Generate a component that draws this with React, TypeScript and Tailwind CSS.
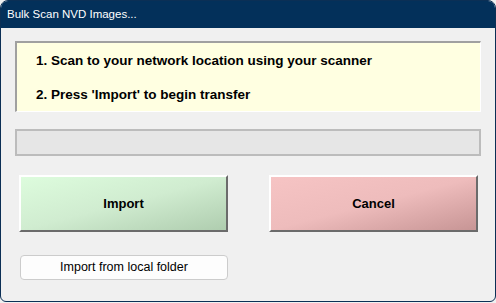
import React from 'react';

export default function App() {
  return (
    <div className="w-[496px] h-[303px] bg-[#f0f0f0] font-['Liberation_Sans',Arial,sans-serif]">
      <div className="w-[496px] h-[302px] flex flex-col border border-[#0b2f55] rounded-t-[8px] rounded-b-[6px] overflow-hidden bg-[#f0f0f0]">
        {/* Title bar */}
        <div className="h-[27px] shrink-0 bg-[#03305a] flex items-center pl-[6px]">
          <span className="text-white text-[11.5px] leading-none">Bulk Scan NVD Images...</span>
        </div>

        <div className="flex flex-col px-[14px] pt-[13px]">
          {/* Instructions */}
          <div className="h-[71px] bg-[#ffffe1] border-t-2 border-l-2 border-t-[#a0a0a0] border-l-[#a0a0a0] border-b border-r border-b-white border-r-white pl-[19px] pt-[10px] flex flex-col gap-[18px]">
            <span className="text-[13.5px] font-bold text-black leading-[16px]">1. Scan to your network location using your scanner</span>
            <span className="text-[13.5px] font-bold text-black leading-[16px]">2. Press 'Import' to begin transfer</span>
          </div>

          {/* Progress bar */}
          <div className="mt-[17px] h-[27px] bg-[#e6e6e6] border-2 border-[#bcbcbc]" />

          {/* Action buttons */}
          <div className="mt-[19px] pl-[4px] flex gap-[41px]">
            <button className="w-[209px] h-[57px] bg-gradient-to-br from-[#ddfcdd] via-[#d0ecd0] to-[#afcdaf] border-t-2 border-l-2 border-t-white border-l-white border-b-2 border-r-2 border-b-[#6b6b6b] border-r-[#6b6b6b] text-[13px] font-bold text-black">
              Import
            </button>
            <button className="w-[209px] h-[57px] bg-gradient-to-br from-[#f6c4c4] via-[#eebcbc] to-[#c79595] border-t-2 border-l-2 border-t-white border-l-white border-b-2 border-r-2 border-b-[#6b6b6b] border-r-[#6b6b6b] text-[13px] font-bold text-black">
              Cancel
            </button>
          </div>

          {/* Local folder */}
          <div className="mt-[22px] pl-[5px]">
            <button className="w-[208px] h-[25px] bg-[#fdfdfd] border border-[#cccccc] rounded-[4px] text-[12.5px] text-black">
              Import from local folder
            </button>
          </div>
        </div>
      </div>
    </div>
  );
}
